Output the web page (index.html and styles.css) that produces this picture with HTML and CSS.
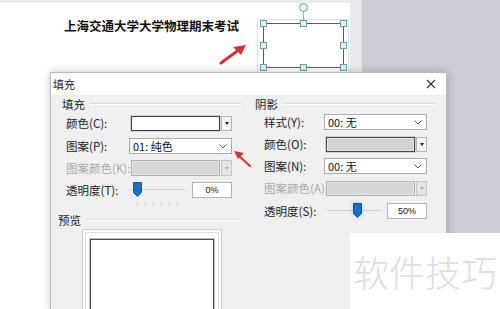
FILE: index.html
```html
<!DOCTYPE html>
<html lang="zh">
<head>
<meta charset="utf-8">
<link rel="stylesheet" href="styles.css">
</head>
<body>
<div class="desk">
  <div class="page">
    <div class="doc-title">上海交通大学大学物理期末考试</div>
    <div class="sel-frame"></div>
    <div class="shape">
      <span class="rot-line"></span>
      <span class="rot"></span>
      <span class="h tl"></span><span class="h tm"></span><span class="h tr"></span>
      <span class="h ml"></span><span class="h mr"></span>
      <span class="h bl"></span><span class="h bm"></span><span class="h br"></span>
    </div>
  </div>
  <div class="gutter"></div>
  <div class="grayarea"></div>
</div>

<div class="dialog">
  <div class="titlebar">
    <span class="title">填充</span>
    <svg class="close" width="10" height="10" viewBox="0 0 10 10"><path d="M1 1L9 9M9 1L1 9" stroke="#333" stroke-width="1.1"/></svg>
  </div>
  <div class="dbody">
    <div class="col col-left">
      <div class="legend"><span>填充</span></div>
      <div class="form form-left">
        <div class="lbl">颜色(C):</div>
        <div class="ctl"><div class="colorpick"><span class="swatch"></span><span class="ddbtn"><i></i></span></div></div>
        <div class="lbl">图案(P):</div>
        <div class="ctl"><div class="combo"><span>01: 纯色</span><svg class="chev" width="8" height="5" viewBox="0 0 8 5"><path d="M0.5 0.5L4 4L7.5 0.5" fill="none" stroke="#555" stroke-width="1"/></svg></div></div>
        <div class="lbl dis">图案颜色(K):</div>
        <div class="ctl"><div class="colorpick disabled wide"><span class="swatch"></span><span class="ddbtn"><i></i></span></div></div>
        <div class="lbl">透明度(T):</div>
        <div class="ctl slider-row">
          <div class="slider s-left"><span class="track"></span><svg class="thumb" width="9" height="15" viewBox="0 0 9 15"><path d="M0.5 0.5H8.5V10.5L4.5 14.5L0.5 10.5Z" fill="#1f6fc1" stroke="#17558f"/></svg></div>
          <div class="edit">0%</div>
        </div>
      </div>
      <div class="ticks"><i></i><i></i><i></i><i></i><i></i><i></i></div>
      <div class="legend legend-preview"><span>预览</span></div>
      <div class="preview"><div class="preview-mid"><div class="preview-inner"></div></div></div>
    </div>
    <div class="col col-right">
      <div class="legend"><span>阴影</span></div>
      <div class="form form-right">
        <div class="lbl">样式(Y):</div>
        <div class="ctl"><div class="combo"><span>00: 无</span><svg class="chev" width="8" height="5" viewBox="0 0 8 5"><path d="M0.5 0.5L4 4L7.5 0.5" fill="none" stroke="#555" stroke-width="1"/></svg></div></div>
        <div class="lbl">颜色(O):</div>
        <div class="ctl"><div class="colorpick gray"><span class="swatch"></span><span class="ddbtn"><i></i></span></div></div>
        <div class="lbl">图案(N):</div>
        <div class="ctl"><div class="combo"><span>00: 无</span><svg class="chev" width="8" height="5" viewBox="0 0 8 5"><path d="M0.5 0.5L4 4L7.5 0.5" fill="none" stroke="#555" stroke-width="1"/></svg></div></div>
        <div class="lbl dis">图案颜色(A):</div>
        <div class="ctl"><div class="colorpick gray disabled"><span class="swatch"></span><span class="ddbtn"><i></i></span></div></div>
        <div class="lbl">透明度(S):</div>
        <div class="ctl slider-row">
          <div class="slider s-right"><span class="track"></span><svg class="thumb" width="9" height="15" viewBox="0 0 9 15"><path d="M0.5 0.5H8.5V10.5L4.5 14.5L0.5 10.5Z" fill="#1f6fc1" stroke="#17558f"/></svg></div>
          <div class="edit">50%</div>
        </div>
      </div>
    </div>
  </div>
</div>

<svg class="arrows" width="500" height="309" viewBox="0 0 500 309">
  <path d="M221 63L240 49" stroke="#d03535" stroke-width="3" stroke-linecap="round"/>
  <path d="M246 45L233 47L241 55Z" fill="#d03535"/>
  <path d="M250 166L239 156" stroke="#d03535" stroke-width="2.2" stroke-linecap="round"/>
  <path d="M234 151L244 153L238 159Z" fill="#d03535"/>
</svg>

<div class="watermark">软件技巧</div>
</body>
</html>
```

FILE: styles.css
```css
html, body {
  margin: 0;
  padding: 0;
}
body {
  width: 500px;
  height: 309px;
  overflow: hidden;
  position: relative;
  font-family: "Noto Sans CJK SC", "Noto Sans", sans-serif;
  color: #222;
  background: #fff;
}

.desk {
  display: flex;
  height: 309px;
}
.page {
  width: 350px;
  background: #fff;
  border-top: 3px solid #ececec;
  box-sizing: border-box;
  position: relative;
}
.gutter {
  width: 12px;
  background: #e9e9ec;
}
.grayarea {
  flex: 1;
  background: #cdcbd4;
}

.doc-title {
  position: absolute;
  left: 64px;
  top: 15px;
  font-size: 12.5px;
  font-weight: 700;
  line-height: 16px;
  color: #111;
}
.sel-frame {
  position: absolute;
  left: 257px;
  top: 16px;
  width: 90px;
  height: 52px;
  border: 1px solid #cfe6ea;
}
.shape {
  position: absolute;
  left: 263px;
  top: 20px;
  width: 79px;
  height: 43px;
  border: 1px solid #5c5c5c;
}
.shape .h {
  position: absolute;
  width: 5px;
  height: 5px;
  background: #dfeff0;
  border: 1px solid #6aa0a8;
}
.h.tl { left: -4px; top: -4px; }
.h.tm { left: 36px; top: -4px; }
.h.tr { right: -4px; top: -4px; }
.h.ml { left: -4px; top: 18px; }
.h.mr { right: -4px; top: 18px; }
.h.bl { left: -4px; bottom: -4px; }
.h.bm { left: 36px; bottom: -4px; }
.h.br { right: -4px; bottom: -4px; }
.rot-line {
  position: absolute;
  left: 39px;
  top: -13px;
  width: 1px;
  height: 10px;
  background: #8bb7bd;
}
.rot {
  position: absolute;
  left: 35px;
  top: -21px;
  width: 7px;
  height: 7px;
  border-radius: 50%;
  background: #e3f1f2;
  border: 1px solid #6aa0a8;
}

/* dialog window */
.dialog {
  position: absolute;
  left: 50px;
  top: 72px;
  width: 397px;
  height: 237px;
  overflow: hidden;
  border: 1px solid #b9b9b9;
  border-bottom: 0;
  box-sizing: border-box;
  background: #f0f0f0;
  box-shadow: 0 0 8px rgba(0, 0, 0, 0.22);
  font-size: 12px;
}
.titlebar {
  height: 22px;
  background: #fff;
  display: flex;
  align-items: center;
  justify-content: space-between;
  padding: 0 10px 0 2px;
}
.title {
  font-size: 11px;
  line-height: 22px;
}
.close {
  display: block;
}

.dbody {
  display: grid;
  grid-template-columns: 199px 1fr;
  padding-top: 2px;
}
.legend {
  display: flex;
  align-items: center;
  height: 14px;
  font-size: 11.5px;
  line-height: 14px;
}
.legend::after {
  content: "";
  flex: 1;
  height: 1px;
  background: #dcdcdc;
  border-bottom: 1px solid #fff;
  margin-left: 5px;
}
.col-left .legend {
  padding-left: 11px;
  margin-right: 9px;
}
.col-left .legend-preview {
  padding-left: 7px;
  margin-top: 6px;
}
.col-right .legend {
  padding-left: 5px;
  margin-right: 10px;
}

.form {
  display: grid;
  align-items: center;
}
.form-left {
  grid-template-columns: 63px 103px;
  grid-template-rows: 24px 22px 22px 22px;
  padding-left: 15px;
}
.form-right {
  grid-template-columns: 60px 103px;
  grid-template-rows: 22px 22px 22px 22px 23px;
  padding-left: 14px;
}
.lbl {
  font-size: 11.5px;
  white-space: nowrap;
  color: #222;
}
.lbl.dis {
  color: #a8a8a8;
}

.combo {
  height: 16px;
  background: #fff;
  border: 1px solid #ababab;
  box-sizing: border-box;
  display: flex;
  align-items: center;
  justify-content: space-between;
  padding: 0 4px 0 3px;
  font-size: 11px;
  color: #111;
}

.colorpick {
  display: flex;
  height: 15px;
  margin-left: 2px;
}
.colorpick.wide {
  height: 16px;
}
.colorpick .swatch {
  flex: 1;
  background: #fff;
  border: 1px solid #3c3c3c;
  box-shadow: inset 0 0 0 1px #fff, 0 0 0 1px #d6d6d6;
}
.colorpick .ddbtn {
  width: 9px;
  margin-left: 1px;
  border: 1px solid #b5b5b5;
  background: #f4f4f4;
  display: flex;
  align-items: center;
  justify-content: center;
}
.colorpick .ddbtn i {
  width: 0;
  height: 0;
  border-left: 2px solid transparent;
  border-right: 2px solid transparent;
  border-top: 3px solid #222;
}
.colorpick.gray .swatch {
  background: #d2d2d2;
  border-color: #444;
  box-shadow: inset 0 0 0 1px #e6e6e6, 0 0 0 1px #d0d0d0;
}
.colorpick.disabled .swatch {
  background: #d6d6d6;
  border-color: #b2b2b2;
  box-shadow: inset 0 0 0 1px #e4e4e4;
}
.colorpick.disabled .ddbtn {
  background: #e4e4e4;
  border-color: #c6c6c6;
}
.colorpick.disabled .ddbtn i {
  border-top-color: #aaa;
}

.slider-row {
  display: flex;
  align-items: center;
  justify-content: space-between;
}
.slider {
  position: relative;
  height: 16px;
}
.slider .track {
  position: absolute;
  left: 0;
  right: 0;
  top: 7px;
  height: 1px;
  background: #cfcfcf;
}
.slider .thumb {
  position: absolute;
  top: 0;
}
.s-left {
  width: 56px;
}
.s-left .thumb {
  left: 4px;
}
.s-right {
  width: 54px;
  margin-left: 3px;
}
.s-right .thumb {
  left: 26px;
  filter: drop-shadow(0 0 2px #9fd0f0);
}
.edit {
  width: 40px;
  height: 16px;
  box-sizing: border-box;
  background: #fff;
  border: 1px solid #b4b4b4;
  font-family: "Liberation Sans", sans-serif;
  font-size: 9px;
  line-height: 14px;
  text-align: center;
  color: #111;
}

.ticks {
  display: flex;
  gap: 7px;
  height: 5px;
  margin-left: 86px;
  margin-top: 1px;
}
.ticks i {
  width: 1px;
  height: 4px;
  background: #d4d4d4;
}

.preview {
  margin: 2px 0 0 31px;
  width: 140px;
  height: 81px;
  border: 1px solid #cdcdcd;
  border-bottom: 0;
  padding: 2px 2px 0 2px;
  box-sizing: border-box;
  background: #fafafa;
}
.preview-mid {
  height: 100%;
  border: 1px solid #dedede;
  border-bottom: 0;
  background: #fff;
  padding: 6px 4px 0 4px;
  box-sizing: border-box;
}
.preview-inner {
  height: 100%;
  border: 1px solid #4d4d4d;
  border-bottom: 0;
  box-sizing: border-box;
  box-shadow: 0 0 0 1px #bbb;
  background: #fff;
}

.arrows {
  position: absolute;
  left: 0;
  top: 0;
  pointer-events: none;
}

.watermark {
  position: absolute;
  left: 350px;
  top: 233px;
  width: 150px;
  height: 76px;
  background: #fff;
  color: #dedede;
  font-size: 36px;
  font-weight: 300;
  line-height: 76px;
  padding-left: 3px;
  box-sizing: border-box;
  white-space: nowrap;
}
```
